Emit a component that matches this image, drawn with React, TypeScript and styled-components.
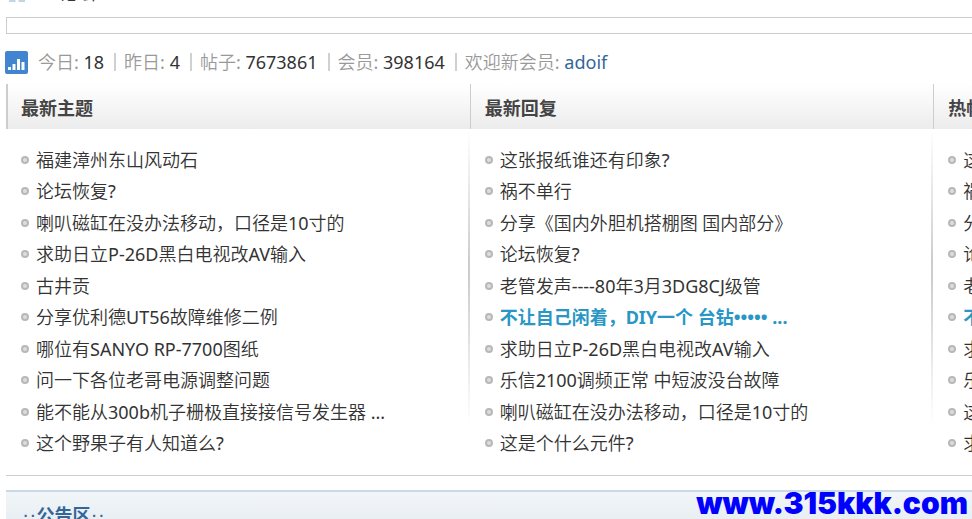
import React from "react";
import styled, { createGlobalStyle } from "styled-components";

const GlobalStyle = createGlobalStyle`
  *, *::before { box-sizing: border-box; }
  body {
    margin: 0;
    background: #fff;
    color: #333;
    font: 400 18px/24px "Noto Sans", "Noto Sans CJK SC DemiLight", "Noto Sans CJK SC", sans-serif;
    overflow: hidden;
  }
  a { color: inherit; text-decoration: none; }
`;

const Page = styled.div`
  position: relative;
  height: 100vh;
  padding-left: 6px;
  overflow: hidden;
`;

const Crumbs = styled.nav`
  display: flex;
  align-items: flex-end;
  gap: 34px;
  height: 17px;
  padding: 0 0 12px 3px;
  overflow: hidden;
  white-space: nowrap;
`;

const HomeIcon = styled.svg`
  flex: none;
  margin-bottom: 2px;
`;

const Notice = styled.div`
  height: 17px;
  border: 1px solid #cdcdcd;
  border-right: 0;
`;

const Stats = styled.div`
  display: flex;
  align-items: center;
  height: 50px;
  padding-top: 6px;
  color: #999;
  white-space: nowrap;
`;

const StatsIcon = styled.svg`
  flex: none;
  margin: 0 10px 0 -1px;
`;

const Stat = styled.span`
  & + & {
    margin-left: 10px;
    padding-left: 10px;
    background: linear-gradient(#d0d0d0, #d0d0d0) left center / 2px 18px no-repeat;
  }
`;

const Value = styled.em`
  color: #333;
  font-style: normal;
`;

const Member = styled.a`
  && { color: #369; }
`;

const Board = styled.main`
  display: grid;
  grid-template-columns: repeat(3, 48%);
  border-bottom: 1px solid #cdcdcd;
`;

const Column = styled.section`
  min-width: 0;
`;

const ColumnTitle = styled.h2<{ $first?: boolean }>`
  height: 45px;
  margin: 0;
  padding-left: ${(p) => (p.$first ? 13 : 14)}px;
  border-left: ${(p) => (p.$first ? 2 : 1)}px solid #cdcdcd;
  background: linear-gradient(#fff, #ececec);
  color: #444;
  font-family: "Noto Sans", "Noto Sans CJK SC", sans-serif;
  font-size: 18px;
  line-height: 48px;
  white-space: nowrap;
`;

const ColumnBody = styled.div`
  padding: 15px 0 16px 15px;
  background: linear-gradient(#fff, #ccc 45%, #ccc 50%, #fff) right 0 top 0 / 2px 296px no-repeat;
`;

const Topics = styled.ul`
  display: grid;
  grid-template-rows: repeat(10, 1fr);
  align-items: center;
  height: 315px;
  margin: 0;
  padding: 0;
  list-style: none;
`;

const Topic = styled.li<{ $hot?: boolean }>`
  display: flex;
  align-items: center;
  gap: 7px;
  white-space: nowrap;
  color: ${(p) => (p.$hot ? "#2897c5" : "inherit")};
  ${(p) => p.$hot && `font-family: "Noto Sans", "Noto Sans CJK SC", sans-serif; font-weight: 700;`}

  &::before {
    content: "";
    width: 8px;
    height: 8px;
    border: 2px solid #b8b8b8;
    border-radius: 50%;
    background: #ddd;
  }
`;

const Forum = styled.section`
  height: 40px;
  margin-top: 14px;
  padding: 0 16px;
  border-top: 2px solid #c9dae6;
  background: linear-gradient(#f2f6f8, #e4ebf0);
`;

const ForumTitle = styled.h2`
  margin: 0;
  color: #369;
  font-family: "Noto Sans", "Noto Sans CJK SC", sans-serif;
  font-size: 18px;
  line-height: 46px;
`;

const Dots = styled.span`
  font: 700 12px/12px "DejaVu Sans Mono", monospace;
  vertical-align: 2px;
`;

const Watermark = styled.div`
  position: absolute;
  right: 4px;
  bottom: 1px;
  color: #00f;
  font: 900 30px/30px Inter, sans-serif;
`;

type Item = { text: string; hot?: boolean };

const HOT: Item = { text: "不让自己闲着，DIY一个 台钻••••• ...", hot: true };

const COLUMNS: { title: string; items: Item[] }[] = [
  {
    title: "最新主题",
    items: [
      { text: "福建漳州东山风动石" },
      { text: "论坛恢复?" },
      { text: "喇叭磁缸在没办法移动，口径是10寸的" },
      { text: "求助日立P-26D黑白电视改AV输入" },
      { text: "古井贡" },
      { text: "分享优利德UT56故障维修二例" },
      { text: "哪位有SANYO RP-7700图纸" },
      { text: "问一下各位老哥电源调整问题" },
      { text: "能不能从300b机子栅极直接接信号发生器 ..." },
      { text: "这个野果子有人知道么?" },
    ],
  },
  {
    title: "最新回复",
    items: [
      { text: "这张报纸谁还有印象?" },
      { text: "祸不单行" },
      { text: "分享《国内外胆机搭棚图 国内部分》" },
      { text: "论坛恢复?" },
      { text: "老管发声----80年3月3DG8CJ级管" },
      HOT,
      { text: "求助日立P-26D黑白电视改AV输入" },
      { text: "乐信2100调频正常 中短波没台故障" },
      { text: "喇叭磁缸在没办法移动，口径是10寸的" },
      { text: "这是个什么元件?" },
    ],
  },
  {
    title: "热帖",
    items: [
      { text: "这张报纸谁还有印象?" },
      { text: "祸不单行" },
      { text: "分享《国内外胆机搭棚图 国内部分》" },
      { text: "论坛恢复?" },
      { text: "老管发声----80年3月3DG8CJ级管" },
      HOT,
      { text: "求助日立P-26D黑白电视改AV输入" },
      { text: "乐信2100调频正常 中短波没台故障" },
      { text: "这是个什么元件?" },
      { text: "求助日立P-26D黑白电视改AV输入" },
    ],
  },
];

export default function App() {
  return (
    <>
      <GlobalStyle />
      <Page>
        <Crumbs>
          <HomeIcon width="16" height="16" viewBox="0 0 16 16" aria-hidden="true">
            <path d="M8 0 16 8V15H9.500V11H6.500V15H0V8Z" fill="#c2d5e3" />
          </HomeIcon>
          <a href="#forum">论坛</a>
        </Crumbs>
        <Notice />
        <Stats>
          <StatsIcon width="23" height="23" viewBox="0 0 23 23" aria-hidden="true">
            <rect width="23" height="23" rx="2" fill="#4184d0" />
            <path d="M3 16h3v3H3zM7.500 13h3v6h-3zM12 8h3v11h-3zM16.500 11h3v8h-3z" fill="#fff" />
          </StatsIcon>
          <Stat>今日: <Value>18</Value></Stat>
          <Stat>昨日: <Value>4</Value></Stat>
          <Stat>帖子: <Value>7673861</Value></Stat>
          <Stat>会员: <Value>398164</Value></Stat>
          <Stat>欢迎新会员: <Member href="#adoif">adoif</Member></Stat>
        </Stats>
        <Board>
          {COLUMNS.map((col, i) => (
            <Column key={col.title}>
              <ColumnTitle $first={i === 0}>{col.title}</ColumnTitle>
              <ColumnBody>
                <Topics>
                  {col.items.map((item, n) => (
                    <Topic key={n} $hot={item.hot}>
                      <a href="#topic">{item.text}</a>
                    </Topic>
                  ))}
                </Topics>
              </ColumnBody>
            </Column>
          ))}
        </Board>
        <Forum>
          <ForumTitle>
            <a href="#announcements"><Dots>··</Dots>公告区<Dots>··</Dots></a>
          </ForumTitle>
        </Forum>
        <Watermark>www.315kkk.com</Watermark>
      </Page>
    </>
  );
}
